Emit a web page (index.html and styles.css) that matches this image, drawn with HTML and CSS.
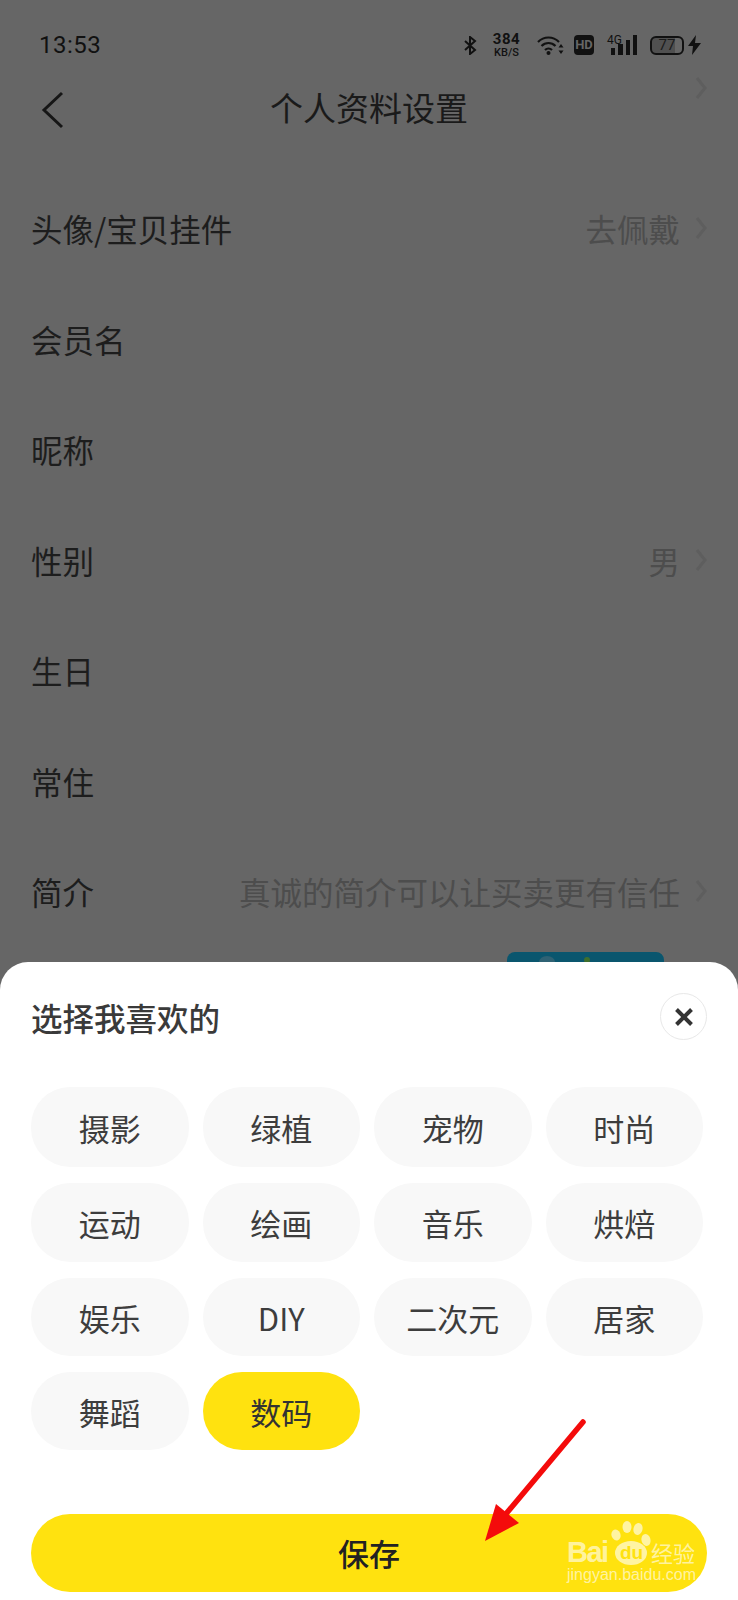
FILE: index.html
```html
<!DOCTYPE html>
<html lang="zh">
<head>
    <meta charset="utf-8">
    <title>个人资料设置</title>
    <link rel="stylesheet" href="styles.css">
</head>
<body>
<div id="page">
    <div class="status">
        <span class="time">13:53</span>
        <div class="status-icons">
            <svg class="ic-bt" width="15" height="19" viewBox="0 0 15 19"><path d="M2 5l10 9-5 4V1l5 4L2 14" fill="none" stroke="#111" stroke-width="2"/></svg>
            <div class="speed"><b>384</b><span>KB/S</span></div>
            <svg class="ic-wifi" width="27" height="20" viewBox="0 0 27 20">
                <path d="M1 7c6-6 15-6 21 0M4.500 11c4-4 10-4 14 0M8 15c2-2 5-2 7 0" fill="none" stroke="#111" stroke-width="2.200"/>
                <circle cx="11.500" cy="18" r="2" fill="#111"/>
                <path d="M24 9l2.500 3.500h-5zM24 19l2.500-3.500h-5z" fill="#111"/>
            </svg>
            <span class="hd">HD</span>
            <div class="signal">
                <span class="g4">4G</span>
                <svg width="26" height="20" viewBox="0 0 26 20"><path d="M0 13h4v7H0zM7 9h5v11H7zM15 5h4v15h-4zM22 0h4v20h-4z" fill="#111"/></svg>
            </div>
            <div class="battery"><span class="batt-num">77</span></div>
            <svg class="ic-bolt" width="13" height="20" viewBox="0 0 13 20"><path d="M8 0L0 11h5l-1 9 9-12H7z" fill="#111"/></svg>
        </div>
    </div>

    <div class="nav">
        <svg class="back" width="24" height="38" viewBox="0 0 24 38"><path d="M22 2L4 19l18 17" fill="none" stroke="#161616" stroke-width="3"/></svg>
        <span class="nav-title">个人资料设置</span>
        <svg class="chev chev-top" width="12" height="22" viewBox="0 0 12 22"><path d="M2 1l8 10-8 10" fill="none" stroke="#5e5e5e" stroke-width="3"/></svg>
    </div>

    <div class="list">
        <div class="row"><span class="label">头像/宝贝挂件</span><span class="val">去佩戴</span><svg class="chev" width="12" height="22" viewBox="0 0 12 22"><path d="M2 1l8 10-8 10" fill="none" stroke="#5e5e5e" stroke-width="3"/></svg></div>
        <div class="row"><span class="label">会员名</span></div>
        <div class="row"><span class="label">昵称</span></div>
        <div class="row"><span class="label">性别</span><span class="val">男</span><svg class="chev" width="12" height="22" viewBox="0 0 12 22"><path d="M2 1l8 10-8 10" fill="none" stroke="#5e5e5e" stroke-width="3"/></svg></div>
        <div class="row"><span class="label">生日</span></div>
        <div class="row"><span class="label">常住</span></div>
        <div class="row"><span class="label">简介</span><span class="val">真诚的简介可以让买卖更有信任</span><svg class="chev" width="12" height="22" viewBox="0 0 12 22"><path d="M2 1l8 10-8 10" fill="none" stroke="#5e5e5e" stroke-width="3"/></svg></div>
    </div>

    <div class="teal">
        <svg width="157" height="10" viewBox="0 0 157 10">
            <ellipse cx="40" cy="10" rx="8" ry="6" fill="#2f6274"/>
            <circle cx="80" cy="8" r="3" fill="#3f6f2c"/>
        </svg>
    </div>

    <div class="sheet">
        <div class="sheet-head">
            <span class="sheet-title">选择我喜欢的</span>
            <div class="close">
                <svg width="20" height="20" viewBox="0 0 20 20"><path d="M2.500 2.500l15 15M17.500 2.500l-15 15" fill="none" stroke="#333" stroke-width="4"/></svg>
            </div>
        </div>
        <div class="tags">
            <div class="tag">摄影</div>
            <div class="tag">绿植</div>
            <div class="tag">宠物</div>
            <div class="tag">时尚</div>
            <div class="tag">运动</div>
            <div class="tag">绘画</div>
            <div class="tag">音乐</div>
            <div class="tag">烘焙</div>
            <div class="tag">娱乐</div>
            <div class="tag">DIY</div>
            <div class="tag">二次元</div>
            <div class="tag">居家</div>
            <div class="tag">舞蹈</div>
            <div class="tag on">数码</div>
        </div>
        <div class="save">保存</div>
    </div>

    <svg class="arrow" width="738" height="1600" viewBox="0 0 738 1600">
        <path d="M583 1422L505 1515" fill="none" stroke="#f40b0b" stroke-width="5.500" stroke-linecap="round"/>
        <path d="M485 1541L496 1504L519 1523z" fill="#f40b0b"/>
    </svg>

    <div class="mark">
        <span class="mark-bai">Bai</span>
        <svg class="mark-paw" width="44" height="46" viewBox="0 0 44 46">
            <g fill="#fff" fill-opacity=".62">
                <ellipse cx="6" cy="15" rx="4.500" ry="5.500" transform="rotate(-20 6 15)"/>
                <ellipse cx="17" cy="7" rx="4.500" ry="6"/>
                <ellipse cx="28" cy="9" rx="4.500" ry="6" transform="rotate(15 28 9)"/>
                <ellipse cx="36" cy="20" rx="4.500" ry="6" transform="rotate(-15 36 20)"/>
                <ellipse cx="21" cy="33" rx="16" ry="12"/>
            </g>
        </svg>
        <span class="mark-du">du</span>
        <span class="mark-jy">经验</span>
        <span class="mark-url">jingyan.baidu.com</span>
    </div>
</div>
</body>
</html>
```

FILE: styles.css
```css
html, body {
    margin: 0;
    padding: 0;
}
body {
    font-family: "Noto Sans CJK SC", "Noto Sans", sans-serif;
    background: #666;
}
#page {
    position: relative;
    width: 738px;
    height: 1600px;
    overflow: hidden;
    background: #666;
    color: #1a1a1a;
}

/* status bar */
.status {
    display: flex;
    align-items: center;
    justify-content: space-between;
    height: 90px;
    padding: 0 37px 0 39px;
}
.time {
    font-family: Roboto, sans-serif;
    font-size: 24px;
    letter-spacing: 0.5px;
    color: #111;
}
.status-icons {
    display: flex;
    align-items: center;
}
.ic-bt {
    margin-right: 15px;
}
.speed {
    display: flex;
    flex-direction: column;
    align-items: center;
    width: 27px;
    margin-right: 17px;
    font-family: Roboto, sans-serif;
    color: #111;
}
.speed b {
    font-size: 15px;
    line-height: 15px;
    letter-spacing: 0.5px;
}
.speed span {
    font-size: 11px;
    line-height: 11px;
    font-weight: 500;
}
.ic-wifi {
    margin-right: 10px;
}
.hd {
    width: 20px;
    height: 20px;
    border-radius: 4px;
    background: #111;
    color: #666;
    font-family: Roboto, sans-serif;
    font-size: 13px;
    font-weight: 700;
    line-height: 20px;
    text-align: center;
    margin-right: 13px;
}
.signal {
    position: relative;
    width: 30px;
    height: 20px;
    margin-right: 13px;
}
.signal svg {
    position: absolute;
    right: 0;
    top: 0;
}
.g4 {
    position: absolute;
    left: 0;
    top: 0;
    font-family: Roboto, sans-serif;
    font-size: 12px;
    line-height: 11px;
    color: #111;
}
.battery {
    width: 30px;
    height: 15px;
    border: 2px solid #111;
    border-radius: 6px;
    background: linear-gradient(to right, #505050 77%, #666 77%);
    text-align: center;
    margin-right: 4px;
}
.batt-num {
    display: block;
    font-family: Roboto, sans-serif;
    font-size: 15px;
    line-height: 15px;
    color: #1c1c1c;
}

/* nav */
.nav {
    position: relative;
    height: 34px;
    padding-bottom: 2px;
    display: flex;
    align-items: center;
    justify-content: center;
}
.back {
    position: absolute;
    left: 40px;
    top: 1px;
}
.nav-title {
    font-size: 33px;
    line-height: 34px;
    color: #1a1a1a;
}
.chev-top {
    position: absolute;
    right: 31px;
    top: -13px;
}

/* rows */
.list {
    padding-top: 47px;
}
.row {
    display: flex;
    align-items: center;
    height: 110.500px;
    padding: 0 31px;
    font-size: 31.500px;
}
.label {
    flex: 1;
    color: #1d1d1d;
}
.val {
    color: #4d4d4d;
    margin-right: 15px;
}

.teal {
    position: absolute;
    left: 507px;
    top: 952px;
    width: 157px;
    height: 30px;
    border-radius: 8px;
    background: #0a566e;
}
.teal svg {
    display: block;
}

/* bottom sheet */
.sheet {
    position: absolute;
    left: 0;
    right: 0;
    top: 962px;
    bottom: 0;
    background: #fff;
    border-radius: 28px 28px 0 0;
    padding: 0 31px;
}
.sheet-head {
    display: flex;
    align-items: center;
    justify-content: space-between;
    height: 47px;
    margin-top: 31px;
}
.sheet-title {
    font-size: 31.500px;
    font-weight: 500;
    color: #3a3a3a;
}
.close {
    display: flex;
    align-items: center;
    justify-content: center;
    width: 45px;
    height: 45px;
    border: 1px solid #e8e8e8;
    border-radius: 50%;
}
.tags {
    display: grid;
    grid-template-columns: repeat(4, 157.500px);
    grid-template-rows: 80px 79px 78px 78px;
    column-gap: 14px;
    row-gap: 16px;
    margin-top: 47px;
}
.tag {
    display: flex;
    align-items: center;
    justify-content: center;
    border-radius: 39px;
    background: #f8f8f8;
    color: #3d3d3d;
    font-size: 31px;
}
.tag.on {
    background: #ffe20f;
    color: #333;
}
.save {
    height: 78px;
    margin-top: 64px;
    border-radius: 39px;
    background: #ffe20f;
    color: #222;
    font-size: 31px;
    font-weight: 500;
    line-height: 78px;
    text-align: center;
}

/* red arrow drawn on the screenshot */
.arrow {
    position: absolute;
    left: 0;
    top: 0;
}

/* watermark */
.mark {
    position: absolute;
    left: 560px;
    top: 1515px;
    width: 145px;
    height: 72px;
    color: rgba(255, 255, 255, 0.62);
}
.mark span {
    position: absolute;
    white-space: nowrap;
}
.mark-bai {
    left: 7px;
    top: 20px;
    font-family: "Liberation Sans", sans-serif;
    font-size: 29px;
    font-weight: 700;
    letter-spacing: -1.500px;
    line-height: 34px;
}
.mark-paw {
    position: absolute;
    left: 50px;
    top: 5px;
}
.mark .mark-du {
    left: 60px;
    top: 27px;
    font-family: "Liberation Sans", sans-serif;
    font-size: 19px;
    font-weight: 700;
    line-height: 22px;
    color: #ffe20f;
}
.mark-jy {
    left: 91px;
    top: 22px;
    font-size: 22px;
    line-height: 30px;
}
.mark-url {
    left: 7px;
    top: 50px;
    font-family: "Liberation Sans", sans-serif;
    font-size: 16px;
    line-height: 20px;
}
```
